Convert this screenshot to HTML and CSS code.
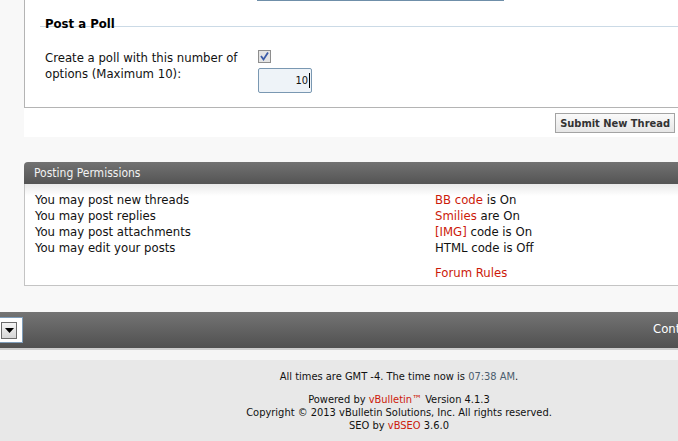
FILE: index.html
```html
<!DOCTYPE html>
<html>
<head>
<meta charset="utf-8">
<link rel="stylesheet" href="styles.css">
</head>
<body>
<div class="page">
  <div class="formbox">
    <div class="topline"></div>
    <h3 class="poll-title">Post a Poll</h3>
    <div class="poll-row">
      <label class="poll-label">Create a poll with this number of options (Maximum 10):</label>
      <div class="poll-controls">
        <span class="checkbox"><svg width="11" height="11" viewBox="0 0 11 11"><path d="M2 5 L4.5 8.5 L9 1.5" fill="none" stroke="#3b5ba8" stroke-width="1.8"/></svg></span>
        <div class="numinput">10<span class="caret"></span></div>
      </div>
    </div>
  </div>
  <div class="submitrow">
    <button class="submit">Submit New Thread</button>
  </div>

  <div class="perms">
    <div class="perms-head">Posting Permissions</div>
    <div class="perms-body">
      <ul class="perm-list">
        <li>You may post new threads</li>
        <li>You may post replies</li>
        <li>You may post attachments</li>
        <li>You may edit your posts</li>
      </ul>
      <ul class="perm-list right">
        <li><a class="red">BB code</a> is On</li>
        <li><a class="red">Smilies</a> are On</li>
        <li><a class="red">[IMG]</a> code is On</li>
        <li>HTML code is Off</li>
        <li class="rules"><a class="red">Forum Rules</a></li>
      </ul>
    </div>
  </div>
</div>

<div class="navbar">
  <div class="selectbox"><span class="dropbtn"><svg width="9" height="5" viewBox="0 0 9 5"><path d="M0 0 H9 L4.5 5 Z" fill="#000"/></svg></span></div>
  <div class="navlinks">Contact Us</div>
</div>
<div class="navshadow"></div>
<div class="footer">
  <p class="time">All times are GMT -4. The time now is <span class="clock">07:38 AM</span>.</p>
  <p class="copy">Powered by <a class="red">vBulletin™</a> Version 4.1.3<br>Copyright © 2013 vBulletin Solutions, Inc. All rights reserved.<br>SEO by <a class="red">vBSEO</a> 3.6.0</p>
</div>
</body>
</html>
```

FILE: styles.css
```css
html, body {
  margin: 0;
  padding: 0;
  overflow: hidden;
}
body {
  background: #f8f8f8;
  font-family: "DejaVu Sans Condensed", "DejaVu Sans", sans-serif;
  font-size: 13px;
  color: #111;
  width: 678px;
  height: 441px;
}
.page {
  width: 678px;
}
.formbox {
  margin-left: 24px;
  height: 107px;
  background: #fff;
  border-left: 1px solid #b4b4b4;
  border-bottom: 1px solid #b4b4b4;
  box-sizing: content-box;
}
.topline {
  margin-left: 232px;
  width: 247px;
  height: 1px;
  background: #6f8fa9;
}
.poll-title {
  margin: 17px 0 0 15px;
  padding-left: 5px;
  font-size: 13px;
  font-weight: bold;
  line-height: 12px;
  height: 8px;
  border-bottom: 1px solid #cbdae6;
  color: #000;
}
.poll-row {
  display: flex;
  margin-top: 23px;
  margin-left: 20px;
}
.poll-label {
  width: 213px;
  line-height: 16px;
  margin-top: 0;
}
.poll-controls {
  display: flex;
  flex-direction: column;
  align-items: flex-start;
}
.checkbox {
  display: flex;
  align-items: center;
  justify-content: center;
  width: 11px;
  height: 11px;
  border: 1px solid #8e8e8e;
  background: #e4e4e4;
}
.numinput {
  margin-top: 5px;
  width: 51px;
  height: 23px;
  box-sizing: content-box;
  border: 1px solid #7a98b2;
  border-radius: 2px;
  background: #eef3f8;
  display: flex;
  align-items: center;
  justify-content: flex-end;
  font-size: 11px;
  padding-right: 1px;
}
.caret {
  display: inline-block;
  width: 1px;
  height: 15px;
  background: #000;
  margin-left: 1px;
}
.submitrow {
  margin-left: 24px;
  height: 29px;
  background: #fff;
  display: flex;
  justify-content: flex-end;
  align-items: flex-start;
  padding-right: 3px;
}
.submit {
  margin-top: 5px;
  height: 20px;
  padding: 0 4px;
  border: 1px solid #a3a3a3;
  background: linear-gradient(#fafafa, #e6e6e6);
  font-family: "DejaVu Sans Condensed", "DejaVu Sans", sans-serif;
  font-size: 11px;
  font-weight: bold;
  color: #333;
  border-radius: 0;
}
.perms {
  margin: 25px 0 0 24px;
}
.perms-head {
  height: 22px;
  line-height: 23px;
  font-size: 12px;
  background: linear-gradient(#727272, #545454);
  border-top-left-radius: 4px;
  color: #f2f2f2;
  padding-left: 10px;
}
.perms-body {
  display: flex;
  background: linear-gradient(#e9e9e9, #ffffff 12px);
  border-left: 1px solid #c4c4c4;
  border-bottom: 1px solid #c4c4c4;
  padding: 8px 0 4px 10px;
  height: 89px;
  box-sizing: content-box;
}
.perm-list {
  list-style: none;
  margin: 0;
  padding: 0;
  line-height: 16px;
  width: 400px;
}
.perm-list.right {
  width: auto;
}
.rules {
  margin-top: 9px;
}
.red {
  color: #cc1a0a;
}
.navbar {
  margin-top: 26px;
  height: 36px;
  background: linear-gradient(#747474, #505050);
  display: flex;
  align-items: center;
  justify-content: space-between;
}
.selectbox {
  width: 21px;
  height: 24px;
  background: #fff;
  border: 1px solid #7f9db9;
  border-left: none;
  display: flex;
  align-items: center;
  padding-left: 1px;
}
.dropbtn {
  width: 14px;
  height: 15px;
  border: 1px solid #6c6c6c;
  background: linear-gradient(#f4f4f4, #d6d6d6);
  display: flex;
  align-items: center;
  justify-content: center;
}
.navlinks {
  color: #fff;
  font-size: 13px;
  white-space: nowrap;
  width: 25px;
  overflow: hidden;
  padding-bottom: 3px;
}
.navshadow {
  height: 10px;
  background: #f5f5f5;
  border-top: 2px solid #cdcdcd;
}
.footer {
  background: #e8e8e8;
  text-align: center;
  font-size: 11px;
  color: #111;
  height: 73px;
  padding: 10px 0 0 120px;
}
.footer p {
  margin: 0;
}
.time {
  line-height: 13px;
}
.clock {
  color: #4c5d6e;
}
.copy {
  margin-top: 10px !important;
  line-height: 13px;
}
```
